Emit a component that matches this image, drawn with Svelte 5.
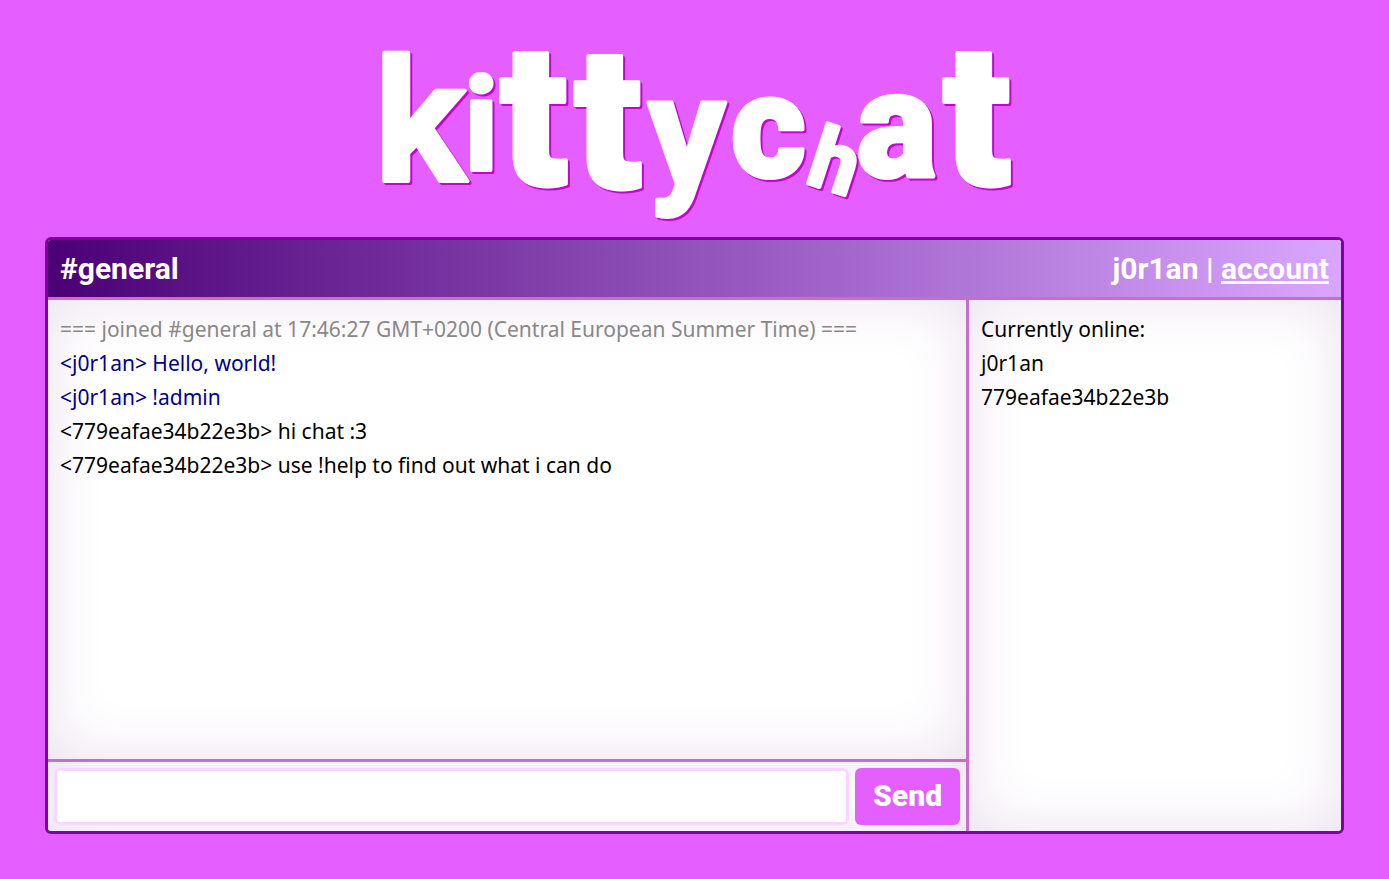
<script lang="ts">
    interface Message {
        from: string;
        text: string;
        kind: 'system' | 'own' | 'other';
    }

    interface LogoLetter {
        char: string;
        x: number;
        y: number;
        size: number;
        weight: number;
        rotate?: number;
    }

    const me = 'j0r1an';
    const channel = '#general';

    const logo: LogoLetter[] = [
        { char: 'k', x: -2, y: 136, size: 170, weight: 700 },
        { char: 'i', x: 87, y: 125, size: 130, weight: 700 },
        { char: 't', x: 123, y: 139, size: 198, weight: 900 },
        { char: 't', x: 197, y: 142, size: 198, weight: 900 },
        { char: 'y', x: 271, y: 139, size: 154, weight: 700 },
        { char: 'c', x: 354, y: 132, size: 144, weight: 900 },
        { char: 'h', x: 427, y: 137, size: 84, weight: 700, rotate: 18 },
        { char: 'a', x: 480, y: 132, size: 150, weight: 900 },
        { char: 't', x: 566, y: 139, size: 198, weight: 900 }
    ];

    let messages: Message[] = $state([
        { from: '', text: '=== joined #general at 17:46:27 GMT+0200 (Central European Summer Time) ===', kind: 'system' },
        { from: 'j0r1an', text: 'Hello, world!', kind: 'own' },
        { from: 'j0r1an', text: '!admin', kind: 'own' },
        { from: '779eafae34b22e3b', text: 'hi chat :3', kind: 'other' },
        { from: '779eafae34b22e3b', text: 'use !help to find out what i can do', kind: 'other' }
    ]);
    let online: string[] = $state(['j0r1an', '779eafae34b22e3b']);
    let draft: string = $state('');

    function send(event: SubmitEvent) {
        event.preventDefault();
        if (draft.trim() === '') return;
        messages.push({ from: me, text: draft, kind: 'own' });
        draft = '';
    }
</script>

<div class="page">
    <h1 class="logo">
        <svg viewBox="0 0 636 180" role="img" aria-label="kittychat">
            <text>
                {#each logo as l}<tspan x={l.x} y={l.y} font-size={l.size} font-weight={l.weight} rotate={l.rotate ?? 0}>{l.char}</tspan>{/each}
            </text>
        </svg>
    </h1>

    <main class="window">
        <header class="titlebar">
            <h2>{channel}</h2>
            <div class="user">{me} | <a href="/account">account</a></div>
        </header>
        <div class="content">
            <section class="chat">
                <div class="messages">
                    {#each messages as message}
                        <p class={message.kind}>{message.from ? `<${message.from}> ` : ''}{message.text}</p>
                    {/each}
                </div>
                <form class="compose" onsubmit={send}>
                    <input type="text" aria-label="Message" autocomplete="off" bind:value={draft} />
                    <button type="submit">Send</button>
                </form>
            </section>
            <aside class="online">
                <p>Currently online:</p>
                {#each online as name (name)}
                    <p>{name}</p>
                {/each}
            </aside>
        </div>
    </main>
</div>

<style>
:global(body) {
    background: #e55eff;
}

.page {
    box-sizing: border-box;
    min-height: 100vh;
    padding: 45px;
    display: flex;
    flex-direction: column;
    font-family: "Noto Sans", sans-serif;
    font-size: 21px;
    line-height: 34px;
}

.logo {
    margin: 0 0 12px;
    display: flex;
    justify-content: center;
}

.logo svg {
    width: 636px;
    max-width: 100%;
    overflow: visible;
    fill: #fff;
    stroke: #fff;
    stroke-width: 4px;
    stroke-linejoin: round;
    font-family: Roboto, sans-serif;
    filter: drop-shadow(2px 2px 0 #c800d8);
}

.window {
    flex: 1;
    display: flex;
    flex-direction: column;
    border: 3px solid #8000a0;
    border-radius: 6px;
    background: #fff;
    overflow: hidden;
}

.titlebar {
    display: flex;
    justify-content: space-between;
    align-items: center;
    padding: 12px 12px 11px;
    border-bottom: 3px solid #c86ec8;
    background: linear-gradient(to right, #4b0076, #d9a6ff);
    color: #fff;
    font-family: Roboto, sans-serif;
    font-size: 30px;
    font-weight: 700;
}

.titlebar h2 {
    margin: 0;
    font-size: 30px;
}

.titlebar a {
    color: #fff;
    text-decoration-thickness: 3px;
}

.content {
    flex: 1;
    display: grid;
    grid-template-columns: 71fr 29fr;
}

.chat {
    min-width: 0;
    display: flex;
    flex-direction: column;
}

.messages {
    flex: 1;
    padding: 12px;
    box-shadow: inset 0 0 60px #eae1ed;
}

.online {
    min-width: 0;
    padding: 12px;
    border-left: 3px solid #c86ec8;
    box-shadow: inset 0 0 60px #eae1ed;
}

p {
    margin: 0;
    overflow-wrap: anywhere;
}

.system {
    color: #888;
}

.own {
    color: #00008b;
}

.compose {
    display: flex;
    gap: 6px;
    padding: 6px;
    border-top: 3px solid #c86ec8;
    box-shadow: inset 0 0 60px #eae1ed;
}

.compose input {
    flex: 1;
    min-width: 0;
    box-sizing: border-box;
    height: 57px;
    padding: 0 12px;
    border: 3px solid #fbd5ff;
    border-radius: 6px;
    background: #fff;
    font: inherit;
}

.compose button {
    padding: 0 18px 2px;
    border: 0;
    border-radius: 6px;
    background: #e55eff;
    color: #fff;
    font-family: Roboto, sans-serif;
    font-size: 30px;
    font-weight: 900;
}
</style>
